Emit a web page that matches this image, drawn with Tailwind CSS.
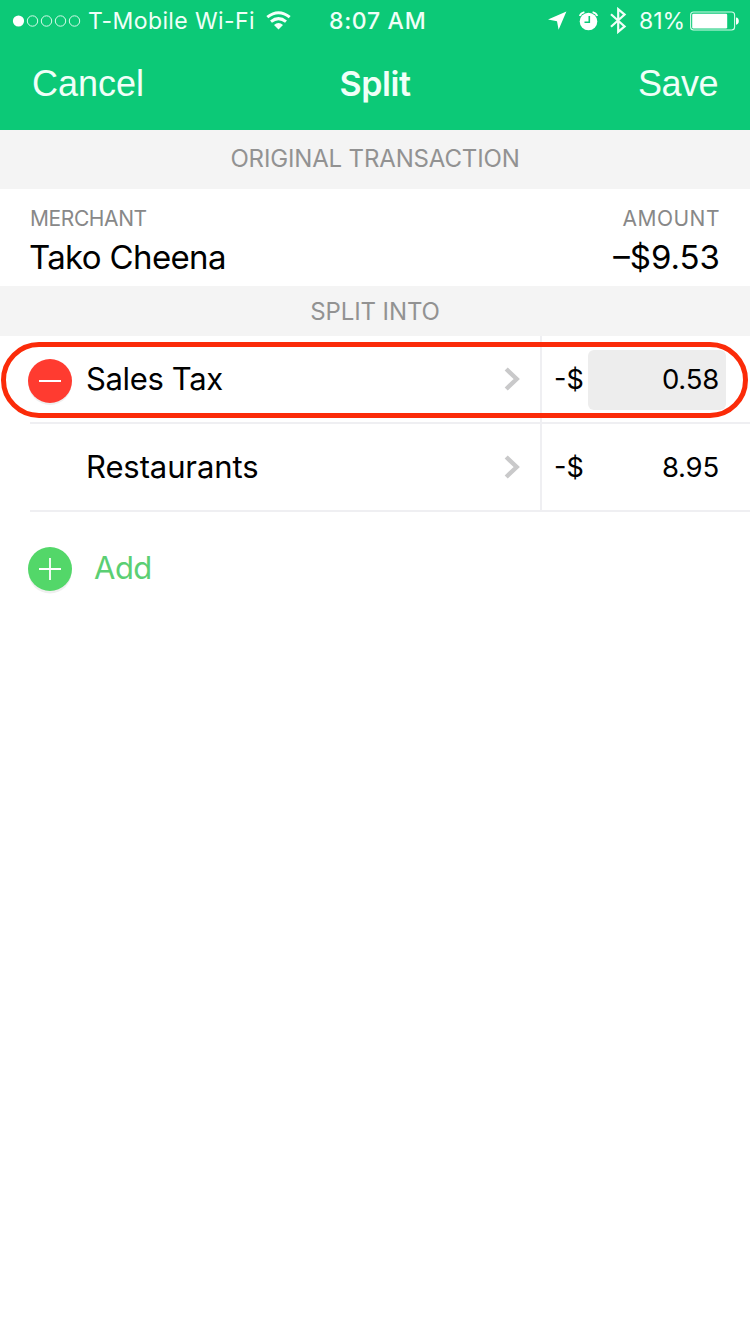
<!DOCTYPE html>
<html lang="en">
<head>
<meta charset="utf-8">
<title>Split</title>
<script src="https://cdn.jsdelivr.net/npm/@tailwindcss/browser@4"></script>
</head>
<body class="bg-white">
<div class="relative flex h-[1334px] w-[750px] flex-col overflow-hidden bg-white font-['Inter','Liberation_Sans',sans-serif] text-black">
  <header class="h-[130px] bg-[#0cc977] text-[#f0fff8]">
    <div class="flex h-[41px] items-center whitespace-nowrap text-[23px] leading-[41px]">
      <div class="flex w-[329px] items-center pl-3">
        <svg class="h-[14px] w-[70px]" viewBox="0 0 70 14" fill="none" stroke="#d5fbe9" stroke-width="1"><circle cx="6.5" cy="7" r="5.6" fill="#fff" stroke="none"/><circle cx="20.5" cy="7" r="5.2"/><circle cx="34.5" cy="7" r="5.2"/><circle cx="48.5" cy="7" r="5.2"/><circle cx="62.5" cy="7" r="5.2"/></svg>
        <span class="ml-[6px] w-[166px] pt-px tracking-[0.4px]">T-Mobile Wi-Fi</span>
        <svg class="ml-3 h-[19px] w-[25px]" viewBox="0 0 25 19" fill="none" stroke="#f5fffa" stroke-width="3"><path d="M1.3 6.2Q12.5-2.8 23.7 6.2"/><path d="M5 10.6Q12.5 4.6 20 10.6"/><path d="M12.5 18.6L8 14Q12.5 10.2 17 14Z" fill="#f5fffa" stroke="none"/></svg>
      </div>
      <span class="w-[219px] pt-px font-medium tracking-[0.7px]">8:07 AM</span>
      <svg class="h-[19px] w-[19px]" viewBox="0 0 19 19" fill="#fff"><path d="M18.4.6L10.6 18.8L9 10.2L0 8.4Z"/></svg>
      <svg class="ml-3 h-[20px] w-[19px]" viewBox="0 0 19 20"><circle cx="9.5" cy="10.5" r="8.8" fill="#fff"/><path d="M.7 5Q1.8 2 5.4 1.1M18.3 5Q17.2 2 13.6 1.1" fill="none" stroke="#fff" stroke-width="1.6"/><path d="M10.3 5v6.2H5.5" fill="none" stroke="#0cc977" stroke-width="1.6"/></svg>
      <svg class="ml-[12px] h-[27px] w-[17px]" viewBox="0 0 17 27" fill="none" stroke="#f0fff8" stroke-width="2.2"><path d="M1 7.2L14.6 19.4L8.2 24.8V2.2L14.6 7.6L1 19.8"/></svg>
      <span class="ml-[12px] w-[45px] pt-px">81%</span>
      <svg class="ml-[6px] h-[20px] w-[50px]" viewBox="0 0 50 20"><rect x=".6" y="1" width="44" height="18" rx="3" fill="none" stroke="#d5fbe9" stroke-width="1.1"/><rect x="2.2" y="2.8" width="35" height="14.6" rx="1.2" fill="#fff"/><path d="M46 6.5q2.8.4 2.8 3.6t-2.8 3.6z" fill="#fff"/></svg>
    </div>
    <div class="grid h-[86px] grid-cols-3 items-center px-8 font-['Liberation_Sans',sans-serif] text-[36px] leading-[86px]">
      <span>Cancel</span>
      <span class="text-center font-['Inter',sans-serif] text-[34px] font-semibold tracking-[-0.4px]">Split</span>
      <span class="text-right tracking-[-0.5px]">Save</span>
    </div>
  </header>
  <h2 class="h-[59px] bg-[#f4f4f4] text-center text-[24px] leading-[57px] tracking-[-0.15px] text-[#929292]">ORIGINAL TRANSACTION</h2>
  <section class="flex h-[97px] justify-between px-[30px] pt-[16px]">
    <div>
      <div class="text-[21px] leading-[27px] tracking-[-0.4px] text-[#888]">MERCHANT</div>
      <div class="-ml-px text-[33px] leading-[51px] tracking-[-0.65px]">Tako Cheena</div>
    </div>
    <div class="text-right">
      <div class="text-[21px] leading-[27px] tracking-[0.5px] text-[#888]">AMOUNT</div>
      <div class="text-[33px] leading-[51px]">–$9.53</div>
    </div>
  </section>
  <h2 class="h-[50px] bg-[#f4f4f4] text-center text-[24px] leading-[52px] tracking-[-0.1px] text-[#929292]">SPLIT INTO</h2>
  <section>
    <div class="flex h-[88px]">
      <div class="flex w-[30px] shrink-0 items-center"><svg class="ml-[26px] h-[50px] w-[48px] shrink-0" viewBox="0 0 48 50"><circle cx="24" cy="28.5" r="21.5" fill="#efefef"/><circle cx="24" cy="26" r="22" fill="#ff3b30"/><path d="M13 26h22" stroke="#fff" stroke-width="2"/></svg></div>
      <div class="flex w-[512px] items-center border-r-2 border-b-2 border-[#efeff2] pr-[20px] pl-[56px]">
        <span class="flex-1 text-[31px] tracking-[-0.35px]">Sales Tax</span>
        <svg class="h-[24px] w-[16px]" viewBox="0 0 16 24" fill="none" stroke="#c9c9ca" stroke-width="4.4"><path d="M2.2 2l10.5 10L2.2 22"/></svg>
      </div>
      <div class="flex flex-1 items-center border-b-2 border-[#efeff2] pt-[2px] pl-[12px] text-[27.5px]">
        <span class="w-[34px] text-[27px]">-$</span>
        <span class="h-[60px] w-[138px] rounded-[6px] bg-[#ededed] pr-[7px] text-right leading-[59px] tracking-[-0.2px]">0.58</span>
      </div>
    </div>
    <div class="flex h-[88px]">
      <div class="w-[30px] shrink-0"></div>
      <div class="flex w-[512px] items-center border-r-2 border-b-2 border-[#efeff2] pr-[20px] pl-[56px]">
        <span class="flex-1 text-[31px] tracking-[-0.1px]">Restaurants</span>
        <svg class="h-[24px] w-[16px]" viewBox="0 0 16 24" fill="none" stroke="#c9c9ca" stroke-width="4.4"><path d="M2.2 2l10.5 10L2.2 22"/></svg>
      </div>
      <div class="flex flex-1 items-center border-b-2 border-[#efeff2] pt-[2px] pl-[12px] text-[27.5px]">
        <span class="w-[34px] text-[27px]">-$</span>
        <span class="w-[138px] pr-[7px] text-right tracking-[-0.2px]">8.95</span>
      </div>
    </div>
  </section>
  <div class="flex h-[114px] items-center pl-[26px] text-[31px] text-[#5bcf73]">
    <svg class="h-[50px] w-[48px]" viewBox="0 0 48 50"><circle cx="24" cy="28" r="21.5" fill="#efefef"/><circle cx="24" cy="25" r="22" fill="#53d769"/><path d="M13 25h22M24 14v22" stroke="#fff" stroke-width="1.8"/></svg>
    <span class="ml-[20px] pb-[2px] tracking-[-0.5px]">Add</span>
  </div>
  <div class="absolute top-[342px] left-[1px] h-[76px] w-[747px] rounded-full border-[5px] border-[#fb2b09]"></div>
</div>
</body>
</html>
